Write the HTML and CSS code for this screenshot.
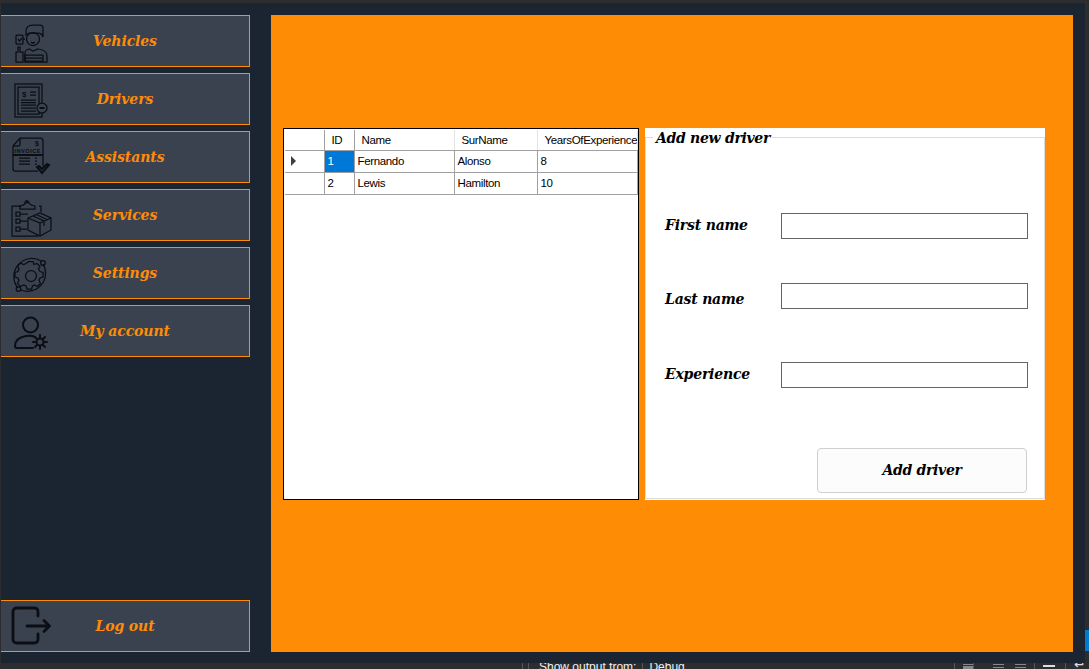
FILE: index.html
```html
<!DOCTYPE html>
<html lang="en">
<head>
  <meta charset="UTF-8" />
  <title>Drivers</title>
  <link rel="stylesheet" href="styles.css">
</head>
<body>
  <div class="desktop">
    <div class="window">
      <nav class="sidebar">
        <a class="nav-btn">
          <svg class="icon" viewBox="0 0 44 44">
            <circle cx="23" cy="20" r="6.5" />
            <path d="M16 16v-4q0-6 7-6h7q3 0 3 3v9q-1-4-5-4h-9z" />
            <path d="M21 21h.1M25 21h.1M21 23q2 2 4 0" />
            <rect x="6" y="16" width="7" height="9" rx="1" />
            <path d="M8 20l1.5 2 2.5-3M13 20h2" />
            <path d="M15 43V34q0-3 4-4l4 2 5-2q9 1 9 7v6z" />
            <path d="M15 36h18v6H15zM15 39h18M33 36v7" />
            <path d="M6 43h7V33H10V28H8v5H6z" />
          </svg>
          <span class="nav-label">Vehicles</span>
        </a>
        <a class="nav-btn">
          <svg class="icon" viewBox="0 0 44 44">
            <rect x="5" y="7" width="27" height="33" />
            <path d="M8 10h21v27H8z" />
            <text class="icon-text" x="12" y="20" font-size="8">$</text>
            <path d="M20 15h6M20 18h6M11 23h15M11 25.5h15M11 28h15M11 31h15M11 34h15" />
            <circle cx="32" cy="31" r="5" fill="#3a4250" />
            <path class="thick" d="M29.5 31h5" />
          </svg>
          <span class="nav-label">Drivers</span>
        </a>
        <a class="nav-btn">
          <svg class="icon" viewBox="0 0 44 44">
            <path d="M3 11l7-8h20q3 0 3 3v25M28 36H5q-2 0-2-2V11M3 11h5q2 0 2-2V3" />
            <text class="icon-text" x="25" y="11" font-size="7">$</text>
            <text class="icon-text" x="4.5" y="18" font-size="5.6" textLength="26">INVOICE</text>
            <path class="thick" d="M3 20h30" />
            <path d="M9 23h11M9 26h11M9 29h11M25 23h2M25 26h2M25 29h2" />
            <path class="thick" d="M27 32l5 6 7-8-2-1-5 5-3-3z" />
          </svg>
          <span class="nav-label">Assistants</span>
        </a>
        <a class="nav-btn">
          <svg class="icon" viewBox="0 0 44 44">
            <path d="M11 13H2v30h26M31 19v-6h-2" />
            <path d="M10 16v-3q5-1 5-3a2 2 0 014 0q1 2 6 3v3z" />
            <circle cx="16.500" cy="9" r="1.200" />
            <path d="M6 19h4v4H6zM6 26h4v4H6zM6 34h4v4H6zM10 21h8M10 28h7M10 36h7" />
            <path d="M18 25l12-5 11 5v12l-11 6-12-6zM18 25l12 5 11-5M30 30v13M23 23l11 5v5M26 21.500l11 5" />
          </svg>
          <span class="nav-label">Services</span>
        </a>
        <a class="nav-btn">
          <svg class="icon" viewBox="0 0 44 44">
            <path d="M31 10A18 18 0 008 37M11 39A18 18 0 0033 13" />
            <circle cx="33" cy="12" r="2.300" />
            <circle cx="8.500" cy="38" r="2.300" />
            <path d="M18.500 10.500h4.500l1 3 3-1 3 3-1.500 2.500 1.500 2.500 3 1v4.500l-3 1-1 2.500 1.500 3-3 3-3-1.500-2 1-1 3h-4.500l-1-3-2.500-1-3 1.500-3-3 1.500-3-1-2.500-3-1v-4.500l3-1 1-2.500-1.500-3 3-3 3 1.500 2.500-1z" />
            <circle cx="21" cy="25" r="5.500" />
          </svg>
          <span class="nav-label">Settings</span>
        </a>
        <a class="nav-btn">
          <svg class="icon bold" viewBox="0 0 44 44">
            <circle cx="20.500" cy="16" r="7.500" />
            <path d="M23 39H7q-2 0-2-2 0-8 11-10 5-1 9 1" />
            <circle cx="30" cy="33" r="3.500" />
            <path d="M30 26v3M30 37v3M23 33h3M34 33h3M25 28l2 2M33 36l2 2M25 38l2-2M33 30l2-2" />
          </svg>
          <span class="nav-label">My account</span>
        </a>
        <a class="nav-btn logout">
          <svg class="icon heavy" viewBox="0 0 44 44">
            <path d="M28 12V8q0-4-4-4H7Q3 4 3 8v27q0 4 4 4h17q4 0 4-4v-5" />
            <path d="M17 22h22M34 16.500l5.500 5.500-5.500 5.500" />
          </svg>
          <span class="nav-label">Log out</span>
        </a>
      </nav>

      <main class="panel">
        <div class="grid-view">
          <table class="drivers">
            <thead>
              <tr><th class="row-head"></th><th class="col-id">ID</th><th class="col-name">Name</th><th class="col-sur">SurName</th><th class="col-exp">YearsOfExperience</th></tr>
            </thead>
            <tbody>
              <tr><td class="row-head"><span class="row-arrow"></span></td><td class="selected">1</td><td>Fernando</td><td>Alonso</td><td>8</td></tr>
              <tr><td class="row-head"></td><td>2</td><td>Lewis</td><td>Hamilton</td><td>10</td></tr>
            </tbody>
          </table>
        </div>

        <div class="form-box">
          <fieldset class="driver-form">
            <legend>Add new driver</legend>
            <div class="field first">
              <label>First name</label>
              <input type="text" />
            </div>
            <div class="field second">
              <label>Last name</label>
              <input type="text" />
            </div>
            <div class="field third">
              <label>Experience</label>
              <input type="text" />
            </div>
            <div class="form-actions">
              <button class="add-btn">Add driver</button>
            </div>
          </fieldset>
        </div>
      </main>
    </div>
    <div class="side-strip">
      <span class="strip-tab"></span>
    </div>
  </div>

  <div class="output-bar">
    <span class="sep"></span>
    <span class="sep"></span>
    <span class="output-label">Show output from:</span>
    <span class="sep light"></span>
    <span class="output-value">Debug</span>
    <span class="tools">
      <span class="sep"></span>
      <span class="tool-a"></span>
      <span class="sep"></span>
      <span class="tool-b"></span>
      <span class="tool-b"></span>
      <span class="sep"></span>
      <span class="tool-c"></span>
      <span class="sep"></span>
      <span class="tool-wrap">↵</span>
    </span>
  </div>
</body>
</html>
```

FILE: styles.css
```css
:root {
  --frame: #2d2d30;
  --dark: #1b2431;
  --btn: #3a4250;
  --orange: #ff8c05;
  --ink: #0b0e13;
}

html, body {
  margin: 0;
  padding: 0;
  height: 669px;
  overflow: hidden;
  background: var(--frame);
  font-family: "DejaVu Serif", serif;
}

.desktop {
  display: flex;
  height: 663px;
  padding: 3px 0 0 1px;
  box-sizing: border-box;
}

.window {
  flex: 1;
  display: flex;
  background: var(--dark);
  padding: 12px 12px 11px 0;
}

.side-strip {
  width: 4px;
  padding-top: 627px;
}

.strip-tab {
  display: block;
  height: 21px;
  background: #007acc;
}

/* sidebar */
.sidebar {
  width: 249px;
  display: flex;
  flex-direction: column;
  gap: 6px;
}

.nav-btn {
  height: 52px;
  box-sizing: border-box;
  display: grid;
  grid-template-columns: 1fr auto 1fr;
  align-items: center;
  background: var(--btn);
  border: 1px solid var(--orange);
  border-left: none;
  padding-left: 9px;
}

.logout {
  margin-top: auto;
}

.icon {
  width: 44px;
  height: 44px;
  fill: none;
  stroke: var(--ink);
  stroke-width: 1.25;
}

.icon.bold {
  stroke-width: 2;
  stroke-linecap: round;
}

.icon.heavy {
  stroke-width: 2.8;
  stroke-linecap: round;
  stroke-linejoin: round;
}

.icon .thick {
  stroke-width: 2;
}

.icon-text {
  fill: var(--ink);
  stroke: none;
  font-family: "Liberation Sans", sans-serif;
  font-weight: bold;
}

.nav-label {
  grid-column: 2;
  margin-left: -9px;
  color: var(--orange);
  font-size: 14px;
  font-weight: bold;
  font-style: italic;
  letter-spacing: -0.1px;
  white-space: nowrap;
}

/* main panel */
.panel {
  flex: 1;
  margin-left: 21px;
  background: var(--orange);
  display: flex;
  align-items: flex-start;
  gap: 6px;
  padding: 113px 0 0 12px;
}

.grid-view {
  width: 356px;
  height: 372px;
  box-sizing: border-box;
  background: #fff;
  border: 1px solid #000;
  padding: 1px 0 0 1px;
}

.drivers {
  border-collapse: collapse;
  table-layout: fixed;
  width: 353px;
  font-family: "Liberation Sans", sans-serif;
  font-size: 11.5px;
  letter-spacing: -0.35px;
  color: #000;
}

.drivers th,
.drivers td {
  box-sizing: border-box;
}

.drivers th {
  height: 20px;
  padding: 0 0 0 7px;
  font-weight: normal;
  text-align: left;
  border-right: 1px solid #e3e3e3;
  border-bottom: 1px solid #a0a0a0;
  white-space: nowrap;
  overflow: hidden;
}

.drivers th.row-head,
.drivers th.col-id {
  border-right: 1px solid #a0a0a0;
}

.drivers td {
  height: 22px;
  padding: 0 0 0 3px;
  border: 1px solid #a0a0a0;
  border-top: none;
}

.drivers th.row-head,
.drivers td.row-head {
  width: 39px;
  padding: 0;
  border-left: none;
}

.col-id { width: 30px; }
.col-name { width: 100px; }
.col-sur { width: 83px; }

.drivers td.selected {
  background: #0078d7;
  color: #fff;
}

.row-arrow {
  display: block;
  width: 0;
  height: 0;
  margin-left: 6px;
  border-left: 5px solid #404040;
  border-top: 5px solid transparent;
  border-bottom: 5px solid transparent;
}

.form-box {
  width: 400px;
  height: 372px;
  box-sizing: border-box;
  background: #fff;
}

.driver-form {
  height: 371px;
  box-sizing: border-box;
  margin: 0;
  padding: 0 16px 0 19px;
  border: 1px solid #dcdcdc;
}

.driver-form legend {
  margin-left: -12px;
  padding: 2px 2px 0 3px;
  font-size: 14px;
  font-weight: bold;
  font-style: italic;
  letter-spacing: -0.3px;
  line-height: 16px;
}

.field {
  display: grid;
  grid-template-columns: 116px 247px;
  align-items: center;
}

.field label {
  font-size: 14px;
  font-weight: bold;
  font-style: italic;
  letter-spacing: -0.2px;
}

.field input {
  height: 26px;
  box-sizing: border-box;
  border: 1px solid #646464;
  background: #fff;
  padding: 0;
  margin: 0;
  outline: none;
}

.first { margin-top: 67px; }
.second { margin-top: 44px; }
.third { margin-top: 53px; }

.first label,
.third label {
  margin-bottom: 2px;
}

.second label {
  margin-top: 6px;
}

.form-actions {
  display: flex;
  justify-content: flex-end;
  margin-top: 60px;
  margin-right: 1px;
}

.add-btn {
  width: 210px;
  height: 45px;
  padding: 0 0 2px 0;
  background: #fcfcfc;
  border: 1px solid #cfcfcf;
  border-radius: 4px;
  font-family: inherit;
  font-size: 14px;
  font-weight: bold;
  font-style: italic;
  letter-spacing: -0.3px;
  color: #000;
}

/* strip of the IDE behind the window */
.output-bar {
  height: 6px;
  overflow: hidden;
  display: flex;
  align-items: flex-start;
  padding-left: 522px;
  font-family: "Liberation Sans", sans-serif;
  font-size: 12px;
  line-height: 14px;
  color: #f1f1f1;
}

.sep {
  width: 1px;
  height: 6px;
  margin-right: 5px;
  background: #555;
}

.output-label {
  margin: -3px 6px 0 5px;
}

.output-value {
  margin-top: -3px;
}

.sep.light {
  margin-right: 6px;
}

.tools {
  margin-left: auto;
  display: flex;
  align-items: flex-start;
  padding-right: 3px;
}

.tools .sep {
  margin: 0 8px;
}

.tool-a {
  width: 11px;
  height: 6px;
  margin: 1px -9px 0 0;
  background: linear-gradient(#888 1px, transparent 1px, transparent 2px, #888 2px);
}

.tool-b {
  width: 11px;
  height: 6px;
  margin: 1px 0 0 11px;
  background: repeating-linear-gradient(#888 0, #888 1px, transparent 1px, transparent 3px);
}

.tool-c {
  width: 12px;
  height: 2px;
  margin: 2px 2px 0 0;
  background: #ddd;
}

.tool-wrap {
  margin-top: -6px;
  font-size: 14px;
  color: #ddd;
}
```
